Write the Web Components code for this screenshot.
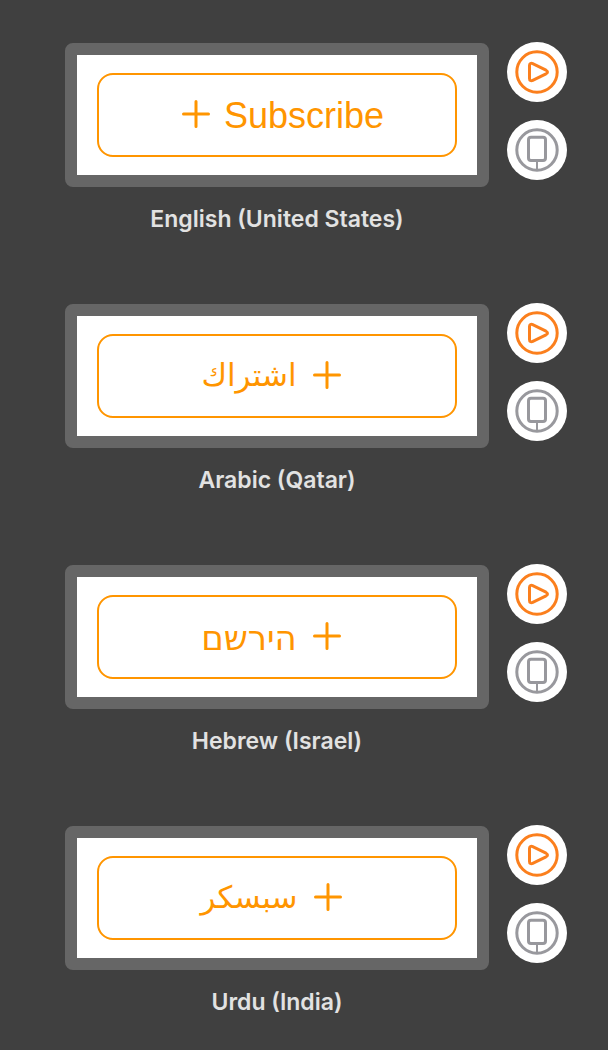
<!DOCTYPE html>
<html lang="en">
<head>
<meta charset="utf-8">
<meta name="viewport" content="width=device-width, initial-scale=1">
<title>Subscribe button localizations</title>
<style>
  body { margin: 0; background: #404040; font-family: Inter, "Liberation Sans", sans-serif; }
</style>
</head>
<body>
<preview-list>
  <locale-preview name="English (United States)"><subscribe-button lang="en" dir="ltr">Subscribe</subscribe-button></locale-preview>
  <locale-preview name="Arabic (Qatar)"><subscribe-button lang="ar" dir="rtl">اشتراك</subscribe-button></locale-preview>
  <locale-preview name="Hebrew (Israel)"><subscribe-button lang="he" dir="rtl">הירשם</subscribe-button></locale-preview>
  <locale-preview name="Urdu (India)"><subscribe-button lang="ur" dir="rtl">سبسکر</subscribe-button></locale-preview>
</preview-list>
<script>
class PreviewList extends HTMLElement {
  constructor() {
    super();
    this.attachShadow({ mode: "open" }).innerHTML = `
      <style>
        :host { display: block; }
        main { display: flex; flex-direction: column; gap: 68px; padding: 42px 41px 30px 65px; }
      </style>
      <main><slot></slot></main>`;
  }
}

class SubscribeButton extends HTMLElement {
  constructor() {
    super();
    this.attachShadow({ mode: "open" }).innerHTML = `
      <style>
        :host { display: block; }
        button {
          box-sizing: border-box; width: 100%; height: 84px; margin: 0; padding: 0 0 2px;
          padding-inline-start: 12px;
          display: flex; align-items: center; justify-content: center; gap: 14px;
          border: 2px solid #ff9500; border-radius: 16px; background: #fff; color: #ff9500;
          font-family: "Liberation Sans", sans-serif; font-size: 36px; line-height: 48px; cursor: pointer;
        }
        span { padding-top: 4px; }
        :host([dir="rtl"]) button { gap: 16px; font-family: "DejaVu Sans", sans-serif; font-size: 34px; }
        :host([lang="ar"]) button, :host([lang="ur"]) button { font-size: 31px; }
        :host([lang="ar"]) span, :host([lang="ur"]) span { padding-top: 0; }
        svg { display: block; flex: none; }
      </style>
      <button type="button">
        <svg width="28" height="28" viewBox="0 0 28 28" fill="none" stroke="currentColor" stroke-width="3" stroke-linecap="round" aria-hidden="true"><path d="M14 1.5v25M1.5 14h25"/></svg>
        <span><slot></slot></span>
      </button>`;
  }
}

class PreviewAction extends HTMLElement {
  static icons = {
    play: `<circle cx="30" cy="30" r="20.2" stroke-width="3"/><path stroke-width="3" stroke-linejoin="round" d="M22.5 23.5C22.5 21.5 24 20.8 25.7 21.6L39 28.2C41 29.3 41 30.7 39 31.8L25.7 38.4C24 39.2 22.5 38.5 22.5 36.5Z"/>`,
    device: `<circle cx="30" cy="30" r="20.2" stroke-width="3"/><rect x="21.5" y="17.2" width="17" height="23.3" rx="2.5" stroke-width="3"/><path stroke-width="2" d="M30 41v9"/>`
  };
  connectedCallback() {
    if (this.shadowRoot) return;
    this.attachShadow({ mode: "open" }).innerHTML = `
      <style>
        :host { display: block; }
        button { display: block; width: 60px; height: 60px; margin: 0; padding: 0; border: 0; border-radius: 50%; background: #fff; color: inherit; cursor: pointer; }
        svg { display: block; }
      </style>
      <button type="button" aria-label="${this.getAttribute("label")}">
        <svg width="60" height="60" viewBox="0 0 60 60" fill="none" stroke="currentColor" aria-hidden="true">${PreviewAction.icons[this.getAttribute("icon")]}</svg>
      </button>`;
  }
}

class LocalePreview extends HTMLElement {
  connectedCallback() {
    if (this.shadowRoot) return;
    this.attachShadow({ mode: "open" }).innerHTML = `
      <style>
        :host { display: block; }
        section { display: flex; align-items: flex-start; gap: 18px; }
        figure { flex: 1; min-width: 0; margin: 1px 0 0; }
        .canvas { border: 12px solid #666; border-radius: 8px; background: #fff; padding: 18px 20px; }
        figcaption { margin-top: 16px; color: #e2e2e2; font-size: 23px; font-weight: 600; line-height: 32px; text-align: center; white-space: nowrap; }
        .actions { display: flex; flex-direction: column; gap: 18px; }
        .play { color: #fb7f1d; }
        .device { color: #98989d; }
      </style>
      <section>
        <figure>
          <div class="canvas"><slot></slot></div>
          <figcaption></figcaption>
        </figure>
        <div class="actions">
          <preview-action class="play" icon="play" label="Live preview"></preview-action>
          <preview-action class="device" icon="device" label="Preview on device"></preview-action>
        </div>
      </section>`;
    this.shadowRoot.querySelector("figcaption").textContent = this.getAttribute("name");
  }
}

customElements.define("preview-list", PreviewList);
customElements.define("subscribe-button", SubscribeButton);
customElements.define("preview-action", PreviewAction);
customElements.define("locale-preview", LocalePreview);
</script>
</body>
</html>
